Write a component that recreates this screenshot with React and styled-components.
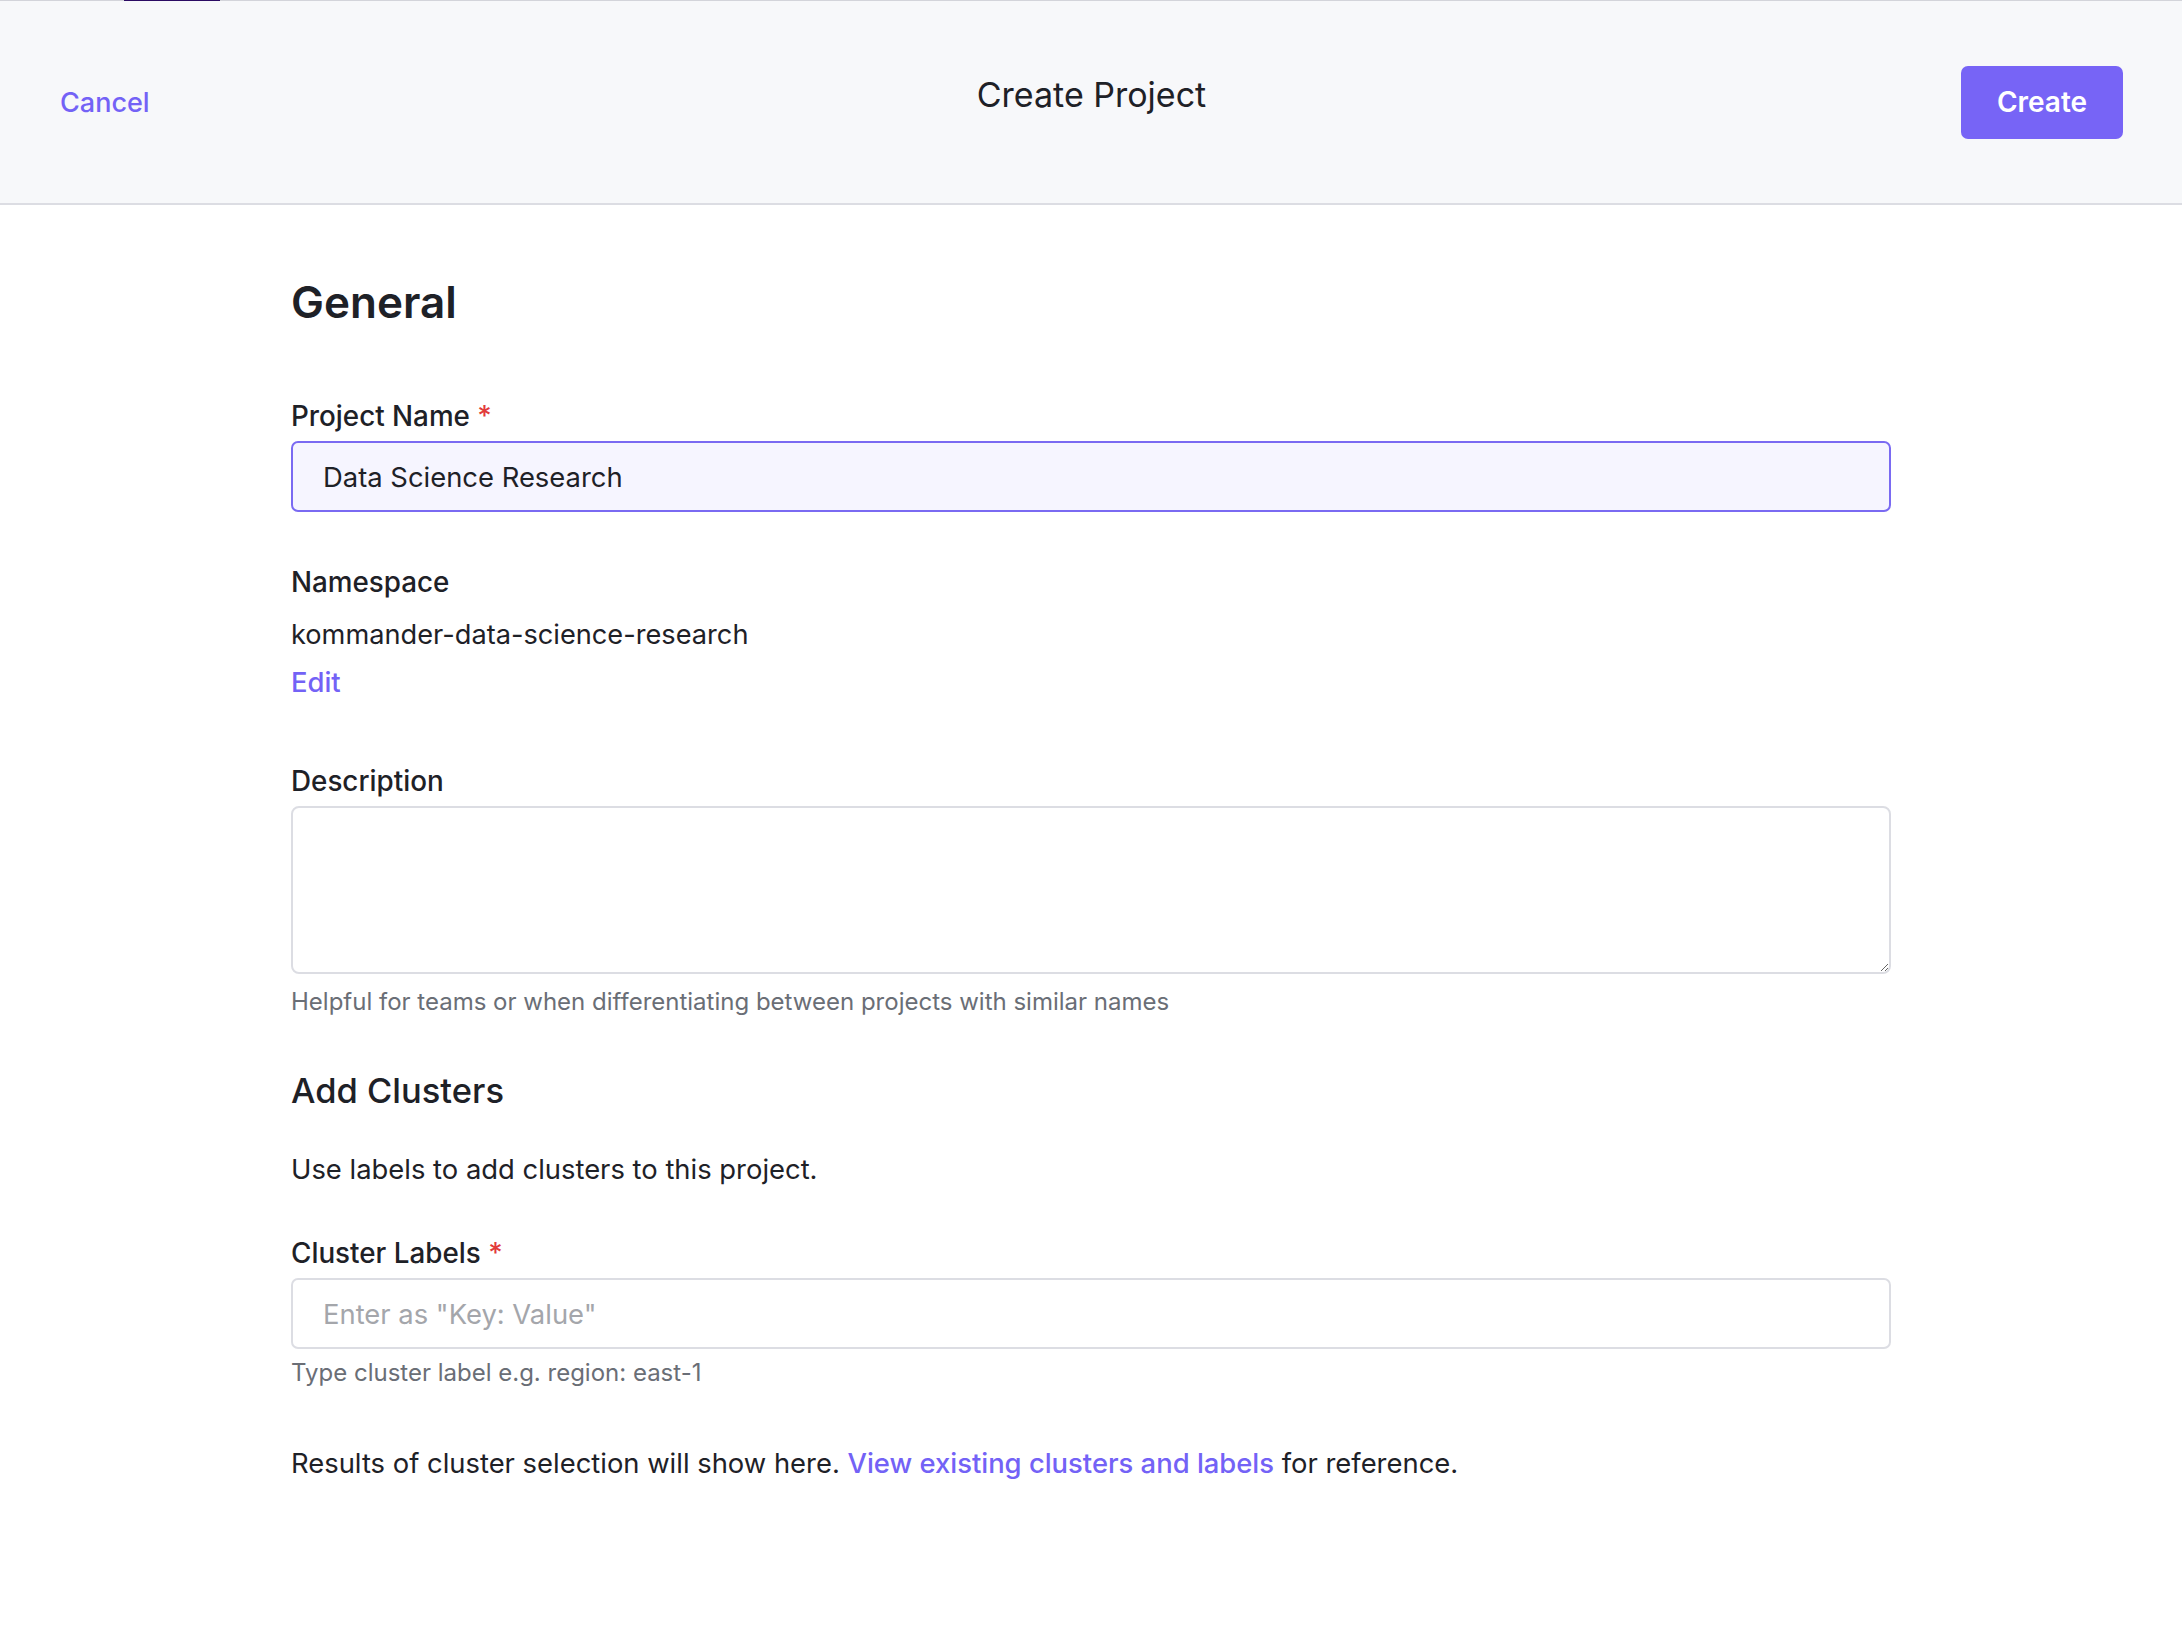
import React from "react";
import styled, { createGlobalStyle } from "styled-components";

const GlobalStyle = createGlobalStyle`
  body {
    margin: 0;
    background: #ffffff;
    font-family: Inter, "Noto Sans", "Liberation Sans", sans-serif;
    color: #1e2127;
  }
`;

export default function App() {
  return (
    <>
      <GlobalStyle />
      <Header>
        <TextButton>Cancel</TextButton>
        <Title>Create Project</Title>
        <PrimaryButton>Create</PrimaryButton>
      </Header>

      <Main>
        <SectionTitle>General</SectionTitle>

        <Field $top={69}>
          <Label>
            Project Name <Required>*</Required>
          </Label>
          <Input $active defaultValue="Data Science Research" />
        </Field>

        <Field $top={53}>
          <Label>Namespace</Label>
          <Value>kommander-data-science-research</Value>
          <Link>Edit</Link>
        </Field>

        <Field $top={65}>
          <Label>Description</Label>
          <TextArea />
          <Hint $gap={13}>
            Helpful for teams or when differentiating between projects with
            similar names
          </Hint>
        </Field>

        <SubTitle>Add Clusters</SubTitle>
        <Paragraph $top={39}>Use labels to add clusters to this project.</Paragraph>

        <Field $top={50}>
          <Label>
            Cluster Labels <Required>*</Required>
          </Label>
          <Input placeholder='Enter as "Key: Value"' />
          <Hint $gap={9}>Type cluster label e.g. region: east-1</Hint>
        </Field>

        <Paragraph $top={58}>
          Results of cluster selection will show here.{" "}
          <Link as="span">View existing clusters and labels</Link> for
          reference.
        </Paragraph>
      </Main>
    </>
  );
}

const Header = styled.header`
  position: relative;
  height: 205px;
  box-sizing: border-box;
  display: grid;
  grid-template-columns: 1fr auto 1fr;
  align-items: center;
  padding: 0 59px 0 60px;
  background: #f7f8fa;
  border-top: 1px solid #d3d4da;
  border-bottom: 2px solid #dcdde3;

  &::before {
    content: "";
    position: absolute;
    top: -1px;
    left: 124px;
    width: 96px;
    height: 1px;
    background: #2b0b63;
  }
`;

const TextButton = styled.button`
  justify-self: start;
  border: 0;
  padding: 0;
  background: none;
  font-family: inherit;
  font-size: 27px;
  font-weight: 500;
  color: #7362f6;
  cursor: pointer;
`;

const Title = styled.h1`
  margin: 0 0 16px;
  font-size: 34px;
  font-weight: 400;
  color: #1e2127;
`;

const PrimaryButton = styled.button`
  justify-self: end;
  width: 162px;
  height: 73px;
  border: 0;
  border-radius: 7px;
  background: #7764f6;
  color: #ffffff;
  font-family: inherit;
  font-size: 28px;
  font-weight: 600;
  cursor: pointer;
`;

const Main = styled.main`
  width: 1600px;
  margin: 0 auto;
  padding: 69px 0 120px;
  display: flex;
  flex-direction: column;
`;

const SectionTitle = styled.h2`
  margin: 0;
  font-size: 44px;
  line-height: 56px;
  font-weight: 600;
`;

const SubTitle = styled.h3`
  margin: 52px 0 0;
  font-size: 34.5px;
  line-height: 44px;
  font-weight: 500;
`;

const Field = styled.div`
  margin-top: ${({ $top }) => $top}px;
  display: flex;
  flex-direction: column;
  align-items: flex-start;
`;

const Label = styled.label`
  font-size: 27.8px;
  line-height: 34px;
  font-weight: 500;
  margin-bottom: 8px;
`;

const Required = styled.span`
  color: #e23b3b;
`;

const Input = styled.input`
  box-sizing: border-box;
  width: 100%;
  height: 71px;
  padding: 0 30px;
  border-radius: 7px;
  border: 2px solid ${({ $active }) => ($active ? "#7a6af2" : "#dcdde3")};
  background: ${({ $active }) => ($active ? "#f6f5ff" : "#ffffff")};
  font-family: inherit;
  font-size: 27.4px;
  color: #1e2127;
  outline: none;

  &::placeholder {
    color: #a4a6ab;
  }
`;

const TextArea = styled.textarea`
  box-sizing: border-box;
  width: 100%;
  height: 168px;
  padding: 16px 30px;
  border-radius: 8px;
  border: 2px solid #dcdde3;
  background: #ffffff;
  font-family: inherit;
  font-size: 27.4px;
  outline: none;
`;

const Value = styled.div`
  margin-top: 11px;
  font-size: 27.2px;
  line-height: 34px;
`;

const Link = styled.a`
  margin-top: 13px;
  font-size: 27.4px;
  line-height: 34px;
  font-weight: 500;
  color: #7362f6;
  cursor: pointer;
`;

const Hint = styled.div`
  margin-top: ${({ $gap }) => $gap}px;
  font-size: 24px;
  line-height: 30px;
  color: #6a6e76;
`;

const Paragraph = styled.p`
  margin: ${({ $top }) => $top}px 0 0;
  font-size: 27.4px;
  line-height: 34px;

  span {
    margin: 0;
  }
`;
